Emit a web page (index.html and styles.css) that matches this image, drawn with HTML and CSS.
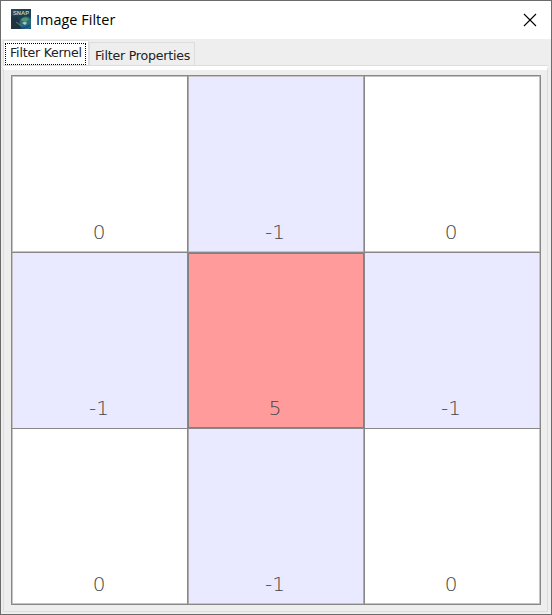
FILE: index.html
```html
<!DOCTYPE html>
<html lang="en">
<head>
<meta charset="utf-8">
<title>Image Filter</title>
<link rel="stylesheet" href="styles.css">
</head>
<body>
<div class="window">
  <header class="titlebar">
    <svg class="logo" width="20" height="20" viewBox="0 0 20 20">
      <defs>
        <linearGradient id="sky" x1="0" y1="0" x2="1" y2="1"><stop offset="0" stop-color="#294b5c"/><stop offset=".5" stop-color="#183d50"/><stop offset="1" stop-color="#174d7c"/></linearGradient>
        <clipPath id="frame"><rect width="20" height="20"/></clipPath>
      </defs>
      <g clip-path="url(#frame)">
        <rect width="20" height="20" fill="url(#sky)"/>
        <path d="M0 7L7 8L10 20H0Z" fill="#20313f"/>
        <circle cx="15" cy="14" r="6.5" fill="#286b77"/>
        <path d="M10 10q4-3 8 0l-3 3-4-1z" fill="#559273"/>
        <path d="M11 14q3-2 5 0l-2 2z" fill="#a9c8c5"/>
        <path d="M5 13l4 3 4 3" stroke="#5d8174" fill="none"/>
        <path d="M10 18q4 2 9-2" stroke="#154b90" stroke-width="2" fill="none"/>
        <text x="2" y="5.5" class="logo-text" textLength="16" lengthAdjust="spacingAndGlyphs">SNAP</text>
      </g>
    </svg>
    <h1 class="title">Image Filter</h1>
    <svg class="close" width="14" height="14" viewBox="0 0 14 14"><path d="M1 1L13 13M13 1L1 13" stroke="#000" stroke-width="1.1" fill="none"/></svg>
  </header>
  <nav class="tabs">
    <div class="tab selected"><span class="focus">Filter Kernel</span></div>
    <div class="tab">Filter Properties</div>
  </nav>
  <main class="pane">
    <div class="kernel">
      <div class="cell">0</div><div class="cell negative">-1</div><div class="cell">0</div>
      <div class="cell negative">-1</div><div class="cell center">5</div><div class="cell negative">-1</div>
      <div class="cell">0</div><div class="cell negative">-1</div><div class="cell">0</div>
    </div>
  </main>
</div>
</body>
</html>
```
FILE: styles.css
```css
* { box-sizing: border-box; }
body { margin: 0; }
.window {
  width: 552px; height: 615px;
  display: flex; flex-direction: column;
  border: 1px solid #6b6b6b;
  background: #eee;
}
.titlebar {
  height: 38px; flex: none;
  display: flex; align-items: center;
  padding: 0 14px 2px 10px;
  background: #fff;
}
.close { margin-top: 1px; }
.logo-text { font: bold 6px "Liberation Sans", sans-serif; fill: #b9cbd0; }
.title {
  margin: 2px auto 0 5px;
  font: 400 14.4px/20px "Open Sans", sans-serif;
  letter-spacing: 0.05px; color: #000;
}
.tabs {
  height: 27px; flex: none;
  display: flex; align-items: flex-end;
  padding-left: 2px;
  font: 12.6px "DejaVu Sans", sans-serif;
  letter-spacing: -0.22px; color: #222;
}
.tab {
  width: 106px; height: 24px; padding-left: 5px;
  border: 1px solid #ddd;
  line-height: 25px; white-space: nowrap;
}
.tab.selected {
  width: 86px; height: 26px; padding: 2px 0 0 1px;
  border-bottom: 0;
  background: #fff;
}
.focus {
  display: block; width: 81px; height: 22px; padding-left: 4px;
  border: 1px dotted #000; line-height: 18px;
}
.pane {
  flex: 1; margin: 0 3px 2px 2px; padding: 5px 5px 4px 7px;
  border: 1px solid #ddd; border-top: 4px solid #fff;
  background: #eee; box-shadow: 0 -1px #ddd;
}
.kernel {
  width: 530px; height: 530px;
  display: grid; grid-template: 176px 175px 175px / 175px 176px 175px; gap: 1px;
  border: 1px solid #888; background: #888;
}
.cell {
  display: flex; align-items: flex-end; justify-content: center;
  padding: 0 2px 8px 0;
  background: #fff;
  font: 200 20px/24px "DejaVu Sans", sans-serif; color: #444;
}
.cell:nth-child(-n+3) { box-shadow: inset 0 1px #c4c4c4, inset 0 -1px #c4c4c4; }
.cell:nth-child(n+7) { box-shadow: inset 0 -1px #c4c4c4; }
.cell:nth-child(3n+1) { border-left: 1px solid #c4c4c4; }
.cell:nth-child(3n+2) { border-left: 1px solid #aaa; border-right: 1px solid #aaa; }
.cell:nth-child(3n) { border-right: 1px solid #c4c4c4; }
.negative { background: #e9e9ff; }
.cell.center { background: #ff9b9b; border: 1px solid #808080; padding-bottom: 7px; }
```
